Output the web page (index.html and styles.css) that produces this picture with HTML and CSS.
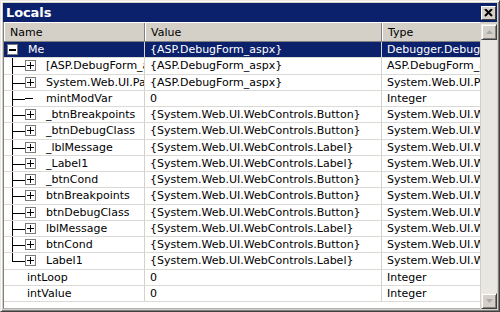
FILE: index.html
```html
<!DOCTYPE html>
<html>
<head>
<meta charset="utf-8">
<link rel="stylesheet" href="styles.css">
</head>
<body>
<div class="window">
  <div class="titlebar">
    <span class="title">Locals</span>
    <span class="close"><svg width="9" height="8" viewBox="0 0 9 8"><path d="M1 0 L8 7 M8 0 L1 7" stroke="#000" stroke-width="2"/></svg></span>
  </div>
  <div class="body">
    <div class="list">
      <div class="header">
        <div class="hcell c-name">Name</div>
        <div class="hcell c-value">Value</div>
        <div class="hcell c-type">Type</div>
      </div>
      <div class="rows">
        <div class="row selected">
          <div class="cell c-name"><span class="box top minus"></span><span class="txt">Me</span></div>
          <div class="cell c-value">{ASP.DebugForm_aspx}</div>
          <div class="cell c-type">Debugger.DebugForm</div>
        </div>
        <div class="row">
          <div class="cell c-name"><span class="branch"></span><span class="box plus"></span><span class="txt">[ASP.DebugForm_aspx]</span></div>
          <div class="cell c-value">{ASP.DebugForm_aspx}</div>
          <div class="cell c-type">ASP.DebugForm_aspx</div>
        </div>
        <div class="row">
          <div class="cell c-name"><span class="branch"></span><span class="box plus"></span><span class="txt">System.Web.UI.Page</span></div>
          <div class="cell c-value">{ASP.DebugForm_aspx}</div>
          <div class="cell c-type">System.Web.UI.Page</div>
        </div>
        <div class="row">
          <div class="cell c-name"><span class="branch"></span><span class="leaf"></span><span class="txt">mintModVar</span></div>
          <div class="cell c-value">0</div>
          <div class="cell c-type">Integer</div>
        </div>
        <div class="row">
          <div class="cell c-name"><span class="branch"></span><span class="box plus"></span><span class="txt">_btnBreakpoints</span></div>
          <div class="cell c-value">{System.Web.UI.WebControls.Button}</div>
          <div class="cell c-type">System.Web.UI.WebControls.Button</div>
        </div>
        <div class="row">
          <div class="cell c-name"><span class="branch"></span><span class="box plus"></span><span class="txt">_btnDebugClass</span></div>
          <div class="cell c-value">{System.Web.UI.WebControls.Button}</div>
          <div class="cell c-type">System.Web.UI.WebControls.Button</div>
        </div>
        <div class="row">
          <div class="cell c-name"><span class="branch"></span><span class="box plus"></span><span class="txt">_lblMessage</span></div>
          <div class="cell c-value">{System.Web.UI.WebControls.Label}</div>
          <div class="cell c-type">System.Web.UI.WebControls.Label</div>
        </div>
        <div class="row">
          <div class="cell c-name"><span class="branch"></span><span class="box plus"></span><span class="txt">_Label1</span></div>
          <div class="cell c-value">{System.Web.UI.WebControls.Label}</div>
          <div class="cell c-type">System.Web.UI.WebControls.Label</div>
        </div>
        <div class="row">
          <div class="cell c-name"><span class="branch"></span><span class="box plus"></span><span class="txt">_btnCond</span></div>
          <div class="cell c-value">{System.Web.UI.WebControls.Button}</div>
          <div class="cell c-type">System.Web.UI.WebControls.Button</div>
        </div>
        <div class="row">
          <div class="cell c-name"><span class="branch"></span><span class="box plus"></span><span class="txt">btnBreakpoints</span></div>
          <div class="cell c-value">{System.Web.UI.WebControls.Button}</div>
          <div class="cell c-type">System.Web.UI.WebControls.Button</div>
        </div>
        <div class="row">
          <div class="cell c-name"><span class="branch"></span><span class="box plus"></span><span class="txt">btnDebugClass</span></div>
          <div class="cell c-value">{System.Web.UI.WebControls.Button}</div>
          <div class="cell c-type">System.Web.UI.WebControls.Button</div>
        </div>
        <div class="row">
          <div class="cell c-name"><span class="branch"></span><span class="box plus"></span><span class="txt">lblMessage</span></div>
          <div class="cell c-value">{System.Web.UI.WebControls.Label}</div>
          <div class="cell c-type">System.Web.UI.WebControls.Label</div>
        </div>
        <div class="row">
          <div class="cell c-name"><span class="branch"></span><span class="box plus"></span><span class="txt">btnCond</span></div>
          <div class="cell c-value">{System.Web.UI.WebControls.Button}</div>
          <div class="cell c-type">System.Web.UI.WebControls.Button</div>
        </div>
        <div class="row">
          <div class="cell c-name"><span class="branch last"></span><span class="box plus"></span><span class="txt">Label1</span></div>
          <div class="cell c-value">{System.Web.UI.WebControls.Label}</div>
          <div class="cell c-type">System.Web.UI.WebControls.Label</div>
        </div>
        <div class="row">
          <div class="cell c-name"><span class="txt root">intLoop</span></div>
          <div class="cell c-value">0</div>
          <div class="cell c-type">Integer</div>
        </div>
        <div class="row">
          <div class="cell c-name"><span class="txt root">intValue</span></div>
          <div class="cell c-value">0</div>
          <div class="cell c-type">Integer</div>
        </div>
      </div>
    </div>
    <div class="scrollbar">
      <div class="sbtn"><svg width="7" height="4" viewBox="0 0 7 4"><path d="M3.5 0 L7 4 L0 4 Z" fill="#a8a8a8"/></svg></div>
      <div class="track"></div>
      <div class="sbtn"><svg width="7" height="4" viewBox="0 0 7 4"><path d="M0 0 L7 0 L3.5 4 Z" fill="#a8a8a8"/></svg></div>
    </div>
  </div>
</div>
</body>
</html>
```
FILE: styles.css
```css
* { box-sizing: border-box; }
html, body { margin: 0; padding: 0; }
body {
  width: 500px;
  height: 312px;
  overflow: hidden;
  background: #d4d0c8;
  font-family: "DejaVu Sans", Tahoma, sans-serif;
  font-size: 11px;
  color: #000;
}
.window {
  width: 500px;
  height: 312px;
  border: 1px solid;
  border-color: #ece9e2 #404040 #404040 #ece9e2;
  box-shadow: inset 1px 1px 0 #ffffff, inset -1px -1px 0 #808080;
  padding: 2px 2px 2px 2px;
  display: flex;
  flex-direction: column;
}
.titlebar {
  height: 19px;
  background: #0c216b;
  display: flex;
  align-items: center;
  justify-content: space-between;
  padding: 0 1px 0 3px;
}
.title {
  color: #fff;
  font-weight: bold;
  font-size: 13px;
  letter-spacing: -0.1px;
}
.close {
  width: 15px;
  height: 14px;
  background: #d4d0c8;
  border: 1px solid;
  border-color: #ffffff #404040 #404040 #ffffff;
  display: flex;
  align-items: center;
  justify-content: center;
}
.body {
  flex: 1;
  display: flex;
  min-height: 0;
}
.list {
  width: 478px;
  background: #fff;
  border-left: 1px solid #808080;
  border-bottom: 1px solid #b0b0b0;
  display: flex;
  flex-direction: column;
  overflow: hidden;
}
.header {
  height: 20px;
  display: flex;
  background: #d4d0c8;
  border-top: 1px solid #ffffff;
  border-bottom: 1px solid #808080;
  flex-shrink: 0;
}
.hcell {
  display: flex;
  align-items: center;
  padding-left: 6px;
  border-right: 1px solid #808080;
  box-shadow: inset -1px 0 0 #d4d0c8, inset 1px 0 0 #ffffff;
  white-space: nowrap;
  overflow: hidden;
}
.c-name { width: 141px; flex-shrink: 0; }
.c-value { width: 237px; flex-shrink: 0; }
.c-type { width: 99px; flex-shrink: 0; }
.header .c-type { border-right: none; }
.rows { display: flex; flex-direction: column; }
.row {
  height: 16.25px;
  display: flex;
  border-bottom: 1px solid #dcdad4;
}
.cell {
  display: flex;
  align-items: center;
  white-space: nowrap;
  overflow: hidden;
  border-right: 1px solid #d4d2cc;
}
.cell.c-value, .cell.c-type { padding-left: 5px; }
.cell.c-type { border-right: none; }
.row.selected { background: #0c216b; color: #fff; }
.row.selected .cell { border-right-color: #d8d6d0; }
.c-name { position: relative; }
.box {
  width: 11px;
  height: 11px;
  border: 1px solid #7a7a7a;
  background: #fff;
  position: relative;
  flex-shrink: 0;
}
.box.top { margin-left: 3px; }
.box::before {
  content: "";
  position: absolute;
  left: 1px;
  top: 4px;
  width: 7px;
  height: 1px;
  background: #000;
}
.box.plus::after {
  content: "";
  position: absolute;
  left: 4px;
  top: 1px;
  width: 1px;
  height: 7px;
  background: #000;
}
.box.minus::before { background: #000; left: 1px; width: 7px; height: 2px; top: 3.5px; }
.txt { margin-left: 10px; }
.txt.root { margin-left: 23px; }
.branch {
  width: 21px;
  align-self: stretch;
  position: relative;
  flex-shrink: 0;
  margin-bottom: -1px;
}
.branch::before {
  content: "";
  position: absolute;
  left: 8px;
  top: -1px;
  bottom: 0;
  width: 1px;
  background: #000;
}
.branch.last::before { bottom: 50%; }
.branch::after {
  content: "";
  position: absolute;
  left: 8px;
  right: 0;
  top: 50%;
  height: 1px;
  background: #000;
}
.leaf {
  width: 8px;
  height: 1px;
  background: #000;
  flex-shrink: 0;
  margin-right: 3px;
}
.scrollbar {
  width: 16px;
  margin-left: 1px;
  display: flex;
  flex-direction: column;
  background: #ece9e2;
  margin-top: 2px;
}
.sbtn {
  height: 16px;
  background: #d4d0c8;
  border: 1px solid;
  border-color: #ece9e2 #404040 #404040 #ece9e2;
  box-shadow: inset 1px 1px 0 #ffffff, inset -1px -1px 0 #808080;
  display: flex;
  align-items: center;
  justify-content: center;
  flex-shrink: 0;
}
.track {
  flex: 1;
  background: #e9e7e1;
}
```
